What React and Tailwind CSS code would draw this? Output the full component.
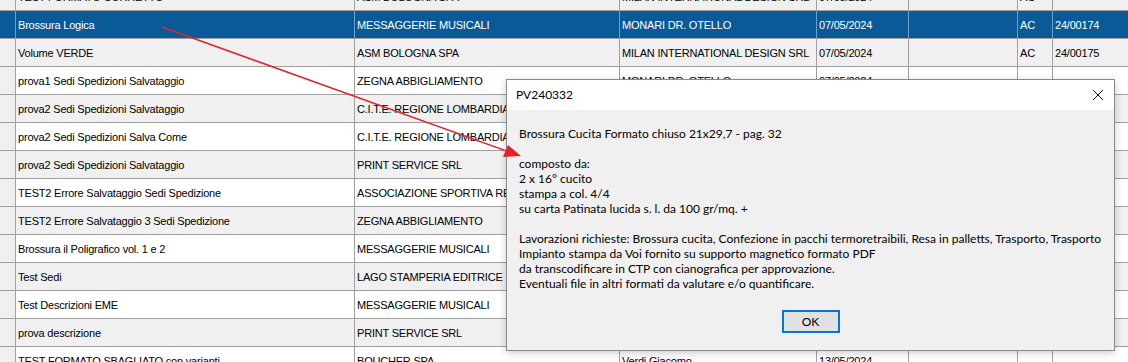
import React from 'react';

const COLS = [
  'w-[16px]',
  'w-[339px]',
  'w-[265px]',
  'w-[197px]',
  'w-[92px]',
  'w-[109px]',
  'w-[35px]',
  'flex-1',
];

// rows 4-12 lie behind the message box from the third column on
const rows = [
  ['TEST FORMATO CORRETTO', 'ASM BOLOGNA SPA', 'MILAN INTERNATIONAL DESIGN SRL', '07/05/2024', '', 'AC', ''],
  ['Brossura Logica', 'MESSAGGERIE MUSICALI', 'MONARI DR. OTELLO', '07/05/2024', '', 'AC', '24/00174'],
  ['Volume VERDE', 'ASM BOLOGNA SPA', 'MILAN INTERNATIONAL DESIGN SRL', '07/05/2024', '', 'AC', '24/00175'],
  ['prova1 Sedi Spedizioni Salvataggio', 'ZEGNA ABBIGLIAMENTO', 'MONARI DR. OTELLO', '07/05/2024', '', '', ''],
  ['prova2 Sedi Spedizioni Salvataggio', 'C.I.T.E. REGIONE LOMBARDIA', '', '', '', '', ''],
  ['prova2 Sedi Spedizioni Salva Come', 'C.I.T.E. REGIONE LOMBARDIA', '', '', '', '', ''],
  ['prova2 Sedi Spedizioni Salvataggio', 'PRINT SERVICE SRL', '', '', '', '', ''],
  ['TEST2 Errore Salvataggio Sedi Spedizione', 'ASSOCIAZIONE SPORTIVA REGGIANA', '', '', '', '', ''],
  ['TEST2 Errore Salvataggio 3 Sedi Spedizione', 'ZEGNA ABBIGLIAMENTO', '', '', '', '', ''],
  ['Brossura il Poligrafico vol. 1 e 2', 'MESSAGGERIE MUSICALI', '', '', '', '', ''],
  ['Test Sedi', 'LAGO STAMPERIA EDITRICE', '', '', '', '', ''],
  ['Test Descrizioni EME', 'MESSAGGERIE MUSICALI', '', '', '', '', ''],
  ['prova descrizione', 'PRINT SERVICE SRL', '', '', '', '', ''],
  ['TEST FORMATO SBAGLIATO con varianti', 'BOUCHER  SPA', 'Verdi Giacomo', '13/05/2024', '', '', ''],
];

const message = `Brossura Cucita Formato chiuso 21x29,7 - pag. 32

composto da:
2 x 16° cucito
stampa a col. 4/4
su carta Patinata lucida s. l. da 100 gr/mq. +

Lavorazioni richieste: Brossura cucita, Confezione in pacchi termoretraibili, Resa in palletts, Trasporto, Trasporto
Impianto stampa da Voi fornito su supporto magnetico formato PDF
da transcodificare in CTP con cianografica per approvazione.
Eventuali file in altri formati da valutare e/o quantificare.`;

function Row({ cells, index }) {
  const selected = index === 1;
  const even = index % 2 === 0;
  const bg = selected ? 'bg-[#0a5a98] text-white' : even ? 'bg-[#f0f0f0] text-black' : 'bg-white text-black';
  const line = selected ? 'border-[#6e9fcf]' : 'border-[#a0a0a0]';
  return (
    <div className={`flex h-[28px] border-b border-[#a0a0a0] ${bg}`}>
      <div className={`${COLS[0]} shrink-0 border-r ${line} ${selected ? '' : 'bg-[#f0f0f0]'}`} />
      {cells.map((c, i) => (
        <div
          key={i}
          className={`${COLS[i + 1]} shrink-0 flex items-center pl-[2px] pt-[1px] overflow-hidden whitespace-nowrap ${i < 6 ? `border-r ${line}` : ''}`}
        >
          {c}
        </div>
      ))}
    </div>
  );
}

export default function App() {
  return (
    <div className="relative w-[1128px] h-[362px] overflow-hidden bg-white font-['Liberation_Sans',Arial,sans-serif] text-[11px] tracking-[-0.2px]">
      {/* grid, scrolled a little past the first row */}
      <div className="-mt-[17px] flex flex-col">
        {rows.map((r, i) => (
          <Row key={i} cells={r} index={i} />
        ))}
      </div>

      {/* message box */}
      <div className="absolute left-[506px] top-[79px] w-[609px] h-[272px] flex flex-col border border-[#8a8a8a] bg-[#f0f0f0] shadow-[0_2px_8px_rgba(0,0,0,0.2)] font-['Lato','Liberation_Sans',sans-serif] tracking-normal text-black">
        <div className="h-[30px] shrink-0 bg-white flex items-center justify-between pl-[9px] pr-[9px] text-[12px]">
          <span>PV240332</span>
          <svg width="12" height="12" viewBox="0 0 12 12" className="mr-[1px]">
            <path d="M1 1 L11 11 M11 1 L1 11" stroke="#111" strokeWidth="1" fill="none" />
          </svg>
        </div>
        <div className="flex-1 flex flex-col pl-[12px] pt-[16px]">
          <div className="whitespace-pre text-[12px] leading-[15px]">{message}</div>
          <div className="flex justify-center mt-[19px] pr-[12px]">
            <button className="w-[58px] h-[23px] border-2 border-[#0078d7] bg-[#e1e1e1] text-[12px] leading-none flex items-center justify-center">
              OK
            </button>
          </div>
        </div>
      </div>

      {/* red pointer */}
      <svg className="absolute left-0 top-0 pointer-events-none" width="1128" height="362">
        <line x1="162" y1="27" x2="512" y2="153" stroke="#e0242a" strokeWidth="1.5" />
        <path d="M521 156 L503 157 L508 145 Z" fill="#e0242a" />
      </svg>
    </div>
  );
}
